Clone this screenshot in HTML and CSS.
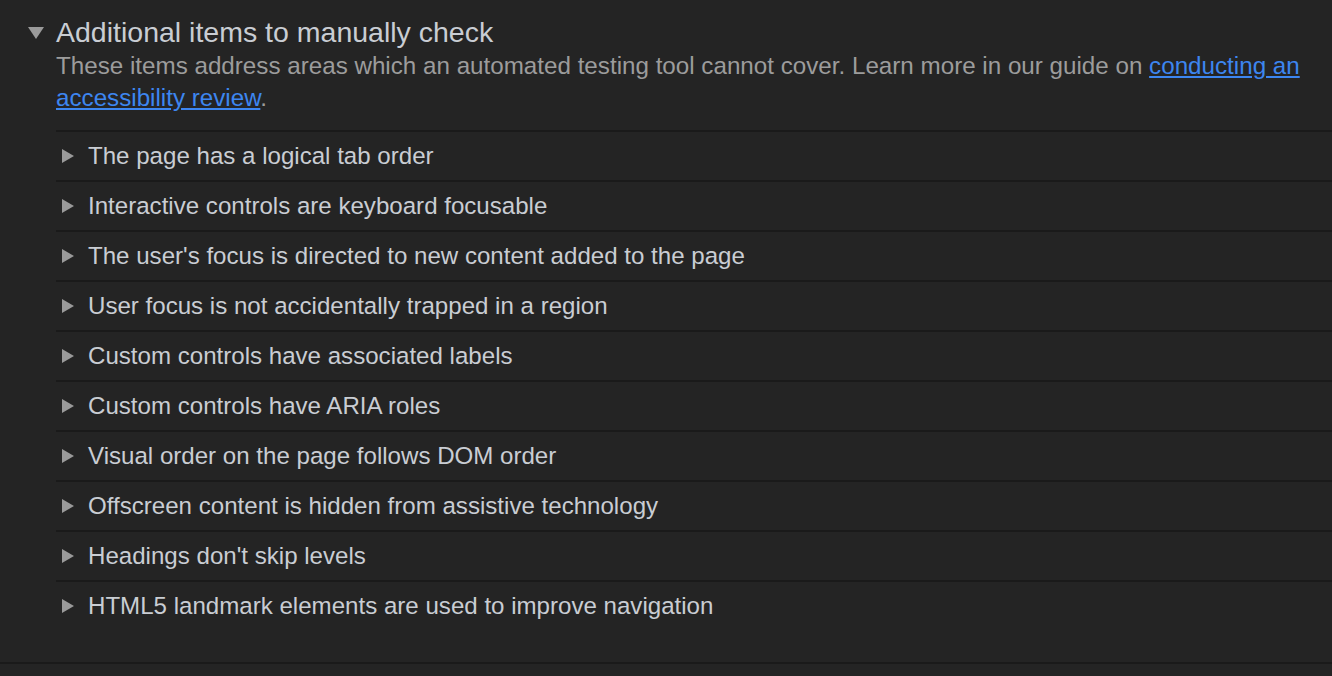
FILE: index.html
```html
<!DOCTYPE html>
<html>
<head>
<meta charset="utf-8">
<link rel="stylesheet" href="styles.css">
</head>
<body>
<section class="group">
  <div class="group-head">
    <svg class="caret-down" width="16" height="12" viewBox="0 0 16 12"><polygon points="0,0 16,0 8,12" fill="#9a9a9a"/></svg>
    <div class="head-text">
      <h2 class="title">Additional items to manually check</h2>
      <p class="desc">These items address areas which an automated testing tool cannot cover. Learn more in our guide on <a href="#">conducting an accessibility review</a>.</p>
    </div>
  </div>
  <ul class="items">
    <li class="item"><svg class="caret" width="12" height="14" viewBox="0 0 12 14"><polygon points="0,0 12,7 0,14" fill="#9a9a9a"/></svg><span>The page has a logical tab order</span></li>
    <li class="item"><svg class="caret" width="12" height="14" viewBox="0 0 12 14"><polygon points="0,0 12,7 0,14" fill="#9a9a9a"/></svg><span>Interactive controls are keyboard focusable</span></li>
    <li class="item"><svg class="caret" width="12" height="14" viewBox="0 0 12 14"><polygon points="0,0 12,7 0,14" fill="#9a9a9a"/></svg><span>The user's focus is directed to new content added to the page</span></li>
    <li class="item"><svg class="caret" width="12" height="14" viewBox="0 0 12 14"><polygon points="0,0 12,7 0,14" fill="#9a9a9a"/></svg><span>User focus is not accidentally trapped in a region</span></li>
    <li class="item"><svg class="caret" width="12" height="14" viewBox="0 0 12 14"><polygon points="0,0 12,7 0,14" fill="#9a9a9a"/></svg><span>Custom controls have associated labels</span></li>
    <li class="item"><svg class="caret" width="12" height="14" viewBox="0 0 12 14"><polygon points="0,0 12,7 0,14" fill="#9a9a9a"/></svg><span>Custom controls have ARIA roles</span></li>
    <li class="item"><svg class="caret" width="12" height="14" viewBox="0 0 12 14"><polygon points="0,0 12,7 0,14" fill="#9a9a9a"/></svg><span>Visual order on the page follows DOM order</span></li>
    <li class="item"><svg class="caret" width="12" height="14" viewBox="0 0 12 14"><polygon points="0,0 12,7 0,14" fill="#9a9a9a"/></svg><span>Offscreen content is hidden from assistive technology</span></li>
    <li class="item"><svg class="caret" width="12" height="14" viewBox="0 0 12 14"><polygon points="0,0 12,7 0,14" fill="#9a9a9a"/></svg><span>Headings don't skip levels</span></li>
    <li class="item"><svg class="caret" width="12" height="14" viewBox="0 0 12 14"><polygon points="0,0 12,7 0,14" fill="#9a9a9a"/></svg><span>HTML5 landmark elements are used to improve navigation</span></li>
  </ul>
</section>
```
FILE: styles.css
```css
html, body {
  margin: 0;
  padding: 0;
  background: #242424;
  font-family: "Liberation Sans", Arial, sans-serif;
}
.group {
  border-bottom: 2px solid #1a1a1a;
  padding-bottom: 32px;
}
.group-head {
  display: flex;
  align-items: flex-start;
  padding: 14px 28px 0 28px;
}
.caret-down {
  flex: none;
  margin-top: 13px;
  margin-right: 12px;
}
.head-text {
  flex: 1;
}
.title {
  margin: 0;
  font-size: 28.5px;
  font-weight: normal;
  line-height: 36px;
  color: #c9cdd3;
}
.desc {
  margin: 0;
  font-size: 24.2px;
  line-height: 32px;
  color: #9c9c9c;
}
.desc a {
  color: #3d86f0;
  text-decoration: underline;
}
.items {
  list-style: none;
  margin: 16px 0 0 56px;
  padding: 0;
}
.item {
  display: flex;
  align-items: center;
  height: 48px;
  border-top: 2px solid #1a1a1a;
  font-size: 24.1px;
  color: #c9cdd3;
}
.caret {
  flex: none;
  margin-left: 6px;
  margin-right: 14px;
}
```
